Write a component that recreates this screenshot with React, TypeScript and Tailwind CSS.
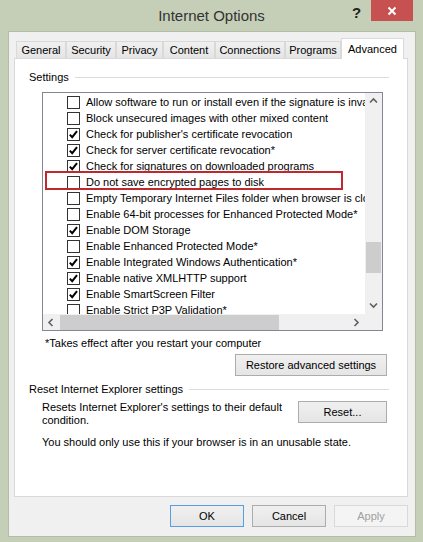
import React from 'react';

type Item = { label: string; checked: boolean };

const items: Item[] = [
  { label: 'Allow software to run or install even if the signature is invalid', checked: false },
  { label: 'Block unsecured images with other mixed content', checked: false },
  { label: "Check for publisher's certificate revocation", checked: true },
  { label: 'Check for server certificate revocation*', checked: true },
  { label: 'Check for signatures on downloaded programs', checked: true },
  { label: 'Do not save encrypted pages to disk', checked: false },
  { label: 'Empty Temporary Internet Files folder when browser is closed', checked: false },
  { label: 'Enable 64-bit processes for Enhanced Protected Mode*', checked: false },
  { label: 'Enable DOM Storage', checked: true },
  { label: 'Enable Enhanced Protected Mode*', checked: false },
  { label: 'Enable Integrated Windows Authentication*', checked: true },
  { label: 'Enable native XMLHTTP support', checked: true },
  { label: 'Enable SmartScreen Filter', checked: true },
  { label: 'Enable Strict P3P Validation*', checked: false },
];

const tabs = [
  { label: 'General', w: 'w-[50px]' },
  { label: 'Security', w: 'w-[50px]' },
  { label: 'Privacy', w: 'w-[47px]' },
  { label: 'Content', w: 'w-[52px]' },
  { label: 'Connections', w: 'w-[70px]' },
  { label: 'Programs', w: 'w-[56px]' },
];

function Chevron({ dir }: { dir: 'up' | 'down' | 'left' | 'right' }) {
  const d = {
    up: 'M1 5.5 L4.5 2 L8 5.5',
    down: 'M1 2.5 L4.5 6 L8 2.5',
    left: 'M5.5 1 L2 4.5 L5.5 8',
    right: 'M2.5 1 L6 4.5 L2.5 8',
  }[dir];
  return (
    <svg width="9" height="9" viewBox="0 0 9 9">
      <path d={d} fill="none" stroke="#606060" strokeWidth="1.6" />
    </svg>
  );
}

function CheckBox({ checked }: { checked: boolean }) {
  return (
    <span className="w-[13px] h-[13px] border border-[#333333] bg-white flex items-center justify-center shrink-0">
      {checked && (
        <svg width="11" height="11" viewBox="0 0 11 11">
          <path d="M1.8 5.6 L4.2 8.2 L9 2.2" fill="none" stroke="#000" strokeWidth="2" />
        </svg>
      )}
    </span>
  );
}

function Button({
  children,
  className = '',
  variant = 'normal',
}: {
  children: React.ReactNode;
  className?: string;
  variant?: 'normal' | 'default' | 'disabled';
}) {
  const tone =
    variant === 'default'
      ? 'border-[#569de5] bg-linear-to-b from-[#f0f0f0] to-[#e5e5e5] text-black'
      : variant === 'disabled'
      ? 'border-[#d9d9d9] bg-[#f4f4f4] text-[#a0a0a0]'
      : 'border-[#acacac] bg-linear-to-b from-[#f0f0f0] to-[#e5e5e5] text-black';
  return (
    <div className={`h-[22px] border flex items-center justify-center ${tone} ${className}`}>
      {children}
    </div>
  );
}

function SectionHeader({ label, className = '' }: { label: string; className?: string }) {
  return (
    <div className={`flex items-center h-[14px] pl-[14px] pr-[18px] ${className}`}>
      <span className="whitespace-nowrap">{label}</span>
      <span className="flex-1 h-px bg-[#dcdcdc] ml-[6px]" />
    </div>
  );
}

function SettingsList() {
  return (
    <div className="relative w-[341px] h-[239px] border border-[#828790] bg-white flex flex-col ml-[27px] mt-[8px]">
      <div className="flex h-[221px]">
        <div className="w-[322px] overflow-hidden pt-[1px]">
          {items.map((it) => (
            <div key={it.label} className="h-[16px] flex items-center pl-[24px] gap-[6px] whitespace-nowrap">
              <CheckBox checked={it.checked} />
              <span>{it.label}</span>
            </div>
          ))}
        </div>
        <div className="w-[17px] bg-[#f0f0f0] flex flex-col">
          <div className="h-[17px] flex items-center justify-center">
            <Chevron dir="up" />
          </div>
          <div className="flex-1 flex flex-col items-center">
            <div className="w-[15px] h-[31px] mt-[132px] bg-[#cdcdcd]" />
          </div>
          <div className="h-[17px] flex items-center justify-center">
            <Chevron dir="down" />
          </div>
        </div>
      </div>
      <div className="flex h-[16px] bg-[#f0f0f0]">
        <div className="w-[17px] flex items-center justify-center">
          <Chevron dir="left" />
        </div>
        <div className="w-[288px] flex items-center">
          <div className="w-[219px] h-[15px] bg-[#cdcdcd]" />
        </div>
        <div className="w-[17px] flex items-center justify-center">
          <Chevron dir="right" />
        </div>
        <div className="w-[17px]" />
      </div>
      {/* highlight around the encrypted pages option */}
      <div className="absolute left-[2px] top-[78px] w-[298px] h-[19px] border-2 border-[#c1272d]" />
    </div>
  );
}

export default function App() {
  return (
    <div className="w-[423px] h-[542px] bg-[#c5cfb7] flex flex-col font-['Liberation_Sans',Arial,sans-serif] text-[11px] text-black leading-[14px]">
      <div className="relative h-[31px] flex items-center justify-center">
        <span className="text-[15px] text-[#333333] leading-[18px]">Internet Options</span>
        <span className="absolute left-[352px] top-[5px] text-[15px] font-bold text-[#222222] leading-[16px]">?</span>
        <div className="absolute left-[371px] top-0 w-[42px] h-[21px] bg-[#c75050] flex items-center justify-center">
          <svg width="10" height="10" viewBox="0 0 10 10">
            <path d="M1.5 1.5 L8.5 8.5 M8.5 1.5 L1.5 8.5" stroke="#fff" strokeWidth="2" />
          </svg>
        </div>
      </div>

      <div className="ml-[8px] mr-[7px] h-[506px] bg-[#f0f0f0] border border-[#b3bda6] flex flex-col pl-[5px] pr-[7px] pt-[6px]">
        <div className="flex items-end h-[20px] pl-[2px]">
          {tabs.map((t) => (
            <div
              key={t.label}
              className={`${t.w} h-[17px] border border-b-0 border-[#d9d9d9] bg-linear-to-b from-[#f0f0f0] to-[#e5e5e5] flex items-center justify-center`}
            >
              {t.label}
            </div>
          ))}
          <div className="relative z-10 w-[63px] h-[21px] -mb-px border border-b-0 border-[#d9d9d9] bg-white flex items-start justify-center pt-[3px]">
            Advanced
          </div>
        </div>

        <div className="h-[439px] border border-[#d9d9d9] bg-white flex flex-col">
          <SectionHeader label="Settings" className="mt-[11px]" />
          <SettingsList />
          <div className="ml-[30px] mt-[5px]">*Takes effect after you restart your computer</div>
          <div className="flex justify-end pr-[20px] mt-[4px]">
            <Button className="w-[152px]">Restore advanced settings</Button>
          </div>
          <SectionHeader label="Reset Internet Explorer settings" className="mt-[6px]" />
          <div className="flex items-start justify-between pl-[27px] pr-[20px] mt-[5px]">
            <div className="w-[250px] leading-[13px]">
              Resets Internet Explorer's settings to their default condition.
            </div>
            <Button className="w-[89px]">Reset...</Button>
          </div>
          <div className="ml-[27px] mt-[8px]">You should only use this if your browser is in an unusable state.</div>
        </div>

        <div className="flex justify-end gap-[8px] pt-[8px] pr-0">
          <Button variant="default" className="w-[74px]">OK</Button>
          <Button className="w-[74px]">Cancel</Button>
          <Button variant="disabled" className="w-[74px]">Apply</Button>
        </div>
      </div>
    </div>
  );
}
